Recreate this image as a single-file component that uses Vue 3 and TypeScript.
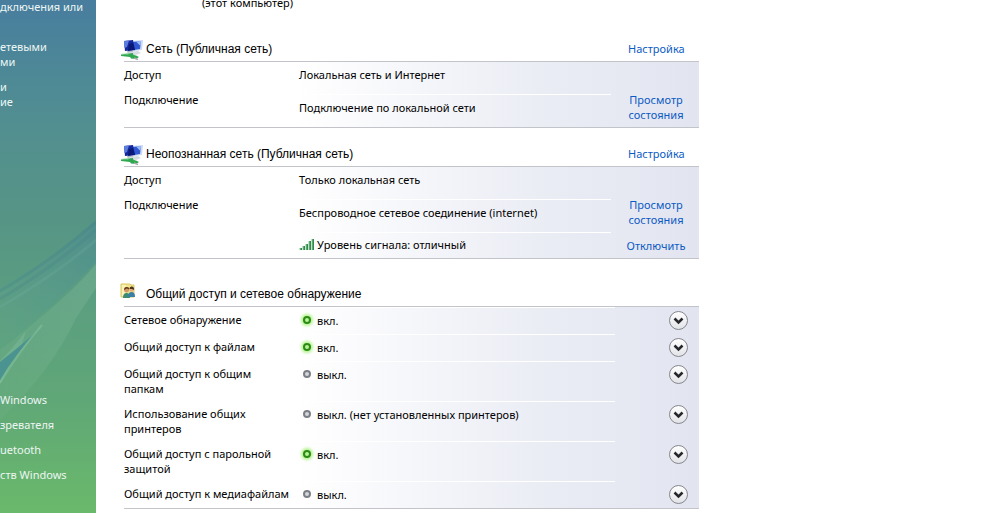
<script setup lang="ts">
interface Detail {
  label?: string
  value: string
  link?: string
  signal?: boolean
}

interface Network {
  name: string
  details: Detail[]
}

interface Setting {
  label: string
  state: string
  on: boolean
}

const taskGroups: string[][] = [
  ['дключения или', ''],
  ['етевыми', 'ми'],
  ['и', 'ие'],
]

const seeAlso: string[] = ['Windows', 'зревателя', 'uetooth', 'ств Windows']

const networks: Network[] = [
  {
    name: 'Сеть (Публичная сеть)',
    details: [
      { label: 'Доступ', value: 'Локальная сеть и Интернет' },
      { label: 'Подключение', value: 'Подключение по локальной сети', link: 'Просмотр состояния' },
    ],
  },
  {
    name: 'Неопознанная сеть (Публичная сеть)',
    details: [
      { label: 'Доступ', value: 'Только локальная сеть' },
      { label: 'Подключение', value: 'Беспроводное сетевое соединение (internet)', link: 'Просмотр состояния' },
      { value: 'Уровень сигнала: отличный', link: 'Отключить', signal: true },
    ],
  },
]

const settings: Setting[] = [
  { label: 'Сетевое обнаружение', state: 'вкл.', on: true },
  { label: 'Общий доступ к файлам', state: 'вкл.', on: true },
  { label: 'Общий доступ к общим папкам', state: 'выкл.', on: false },
  { label: 'Использование общих принтеров', state: 'выкл. (нет установленных принтеров)', on: false },
  { label: 'Общий доступ с парольной защитой', state: 'вкл.', on: true },
  { label: 'Общий доступ к медиафайлам', state: 'выкл.', on: false },
]
</script>

<template>
  <div class="page">
    <aside class="sidebar">
      <svg class="swoosh" viewBox="0 0 96 513" preserveAspectRatio="none" aria-hidden="true">
        <defs>
          <linearGradient id="band" x1="1" y1="0" x2="0" y2="1">
            <stop offset="0" stop-color="#4a8a92" stop-opacity=".6" />
            <stop offset="1" stop-color="#62a58f" stop-opacity=".2" />
          </linearGradient>
          <linearGradient id="pale" x1="1" y1="0" x2="0" y2="1">
            <stop offset="0" stop-color="#86bd9b" stop-opacity=".35" />
            <stop offset="1" stop-color="#86bd9b" stop-opacity=".1" />
          </linearGradient>
        </defs>
        <path d="M96 220 Q55 258 0 288 V350 Q55 305 96 262Z" fill="url(#band)" />
        <path d="M96 222 Q50 262 0 291" fill="none" stroke="#438188" stroke-opacity=".3" stroke-width="3" />
        <path d="M96 230 Q52 268 0 299" fill="none" stroke="#438188" stroke-opacity=".25" stroke-width="3" />
        <path d="M96 240 Q55 275 0 307" fill="none" stroke="#7ab5a3" stroke-opacity=".2" stroke-width="3" />
        <path d="M96 264 Q70 296 0 350 V420 Q52 370 76 318 L96 288Z" fill="url(#pale)" />
        <path d="M26 331 L13 347 0 361 V384 L22 344Z" fill="#7cb99a" fill-opacity=".5" />
        <path d="M36 332 Q18 348 0 362 V380 Q14 356 36 332Z" fill="#4b9390" />
        <path d="M42 325 Q20 350 0 383" fill="none" stroke="#88c49f" stroke-opacity=".5" stroke-width="2" />
      </svg>
      <nav class="tasks">
        <a v-for="(group, i) in taskGroups" :key="i" href="#" class="task">
          <span v-for="(line, j) in group" :key="j" class="task-line">{{ line }}</span>
        </a>
      </nav>
      <nav class="see-also">
        <a v-for="item in seeAlso" :key="item" href="#" class="task">{{ item }}</a>
      </nav>
    </aside>

    <main class="content">
      <p class="computer">(этот компьютер)</p>

      <section v-for="net in networks" :key="net.name" class="network">
        <header class="head">
          <svg class="net-icon" viewBox="0 0 24 22" aria-hidden="true">
            <path d="M7 12h6l2 5H9z" fill="#a7b3c4" />
            <path d="M12 2l11-1-1 10-8 1z" fill="#c9daf5" />
            <path d="M13 3l8-1-1 8-6 1z" fill="#3158d0" />
            <path d="M16 2.500l5-.5-.5 5z" fill="#9dbcf8" />
            <path d="M4 2l9-1 2 10-10 1z" fill="#1428a0" />
            <path d="M4 2l5-.5L7 8l-2.600 1z" fill="#5c7ddc" />
            <path d="M9 5l4-1 2 7-7 1z" fill="#0a1878" />
            <path d="M7 13l11-1 3 2-5 2z" fill="#d7dce3" />
            <path d="M1 15.500l12-1.500v2l3 .5 3 1.500-3 2-5-.5-1-1.500-9-1z" fill="#2fa84f" />
            <path d="M0 15l11-1-3 1.500z" fill="#97dca6" />
            <path d="M14 19l4 1.500" stroke="#a9aaa9" stroke-width="1.500" />
          </svg>
          <h2 class="title">{{ net.name }}</h2>
          <a href="#" class="link">Настройка</a>
        </header>
        <div class="panel">
          <div v-for="(d, i) in net.details" :key="i" class="detail">
            <span class="label">{{ d.label }}</span>
            <span class="value">
              <svg v-if="d.signal" class="signal" viewBox="0 0 15 13" aria-hidden="true">
                <path d="M1 12v-2h2v2zM4 12V8h2v4zM7 12V6h2v6zM10 12V3h2v9zM13 12V1h2v11z" fill="#2f8a4b" />
                <path d="M1 12v-2M4 12V8M7 12V6M10 12V3M13 12V1" stroke="#8dc79b" stroke-width="1" />
              </svg>
              {{ d.value }}
            </span>
            <a v-if="d.link" href="#" class="link">{{ d.link }}</a>
          </div>
        </div>
      </section>

      <section class="sharing">
        <header class="head">
          <svg class="share-icon" viewBox="0 0 16 16" aria-hidden="true">
            <path d="M1 1h9l1 1h3v12H1z" fill="#f2e48c" stroke="#d9c767" />
            <path d="M2 2h4v11H2z" fill="#faf3b8" />
            <path d="M3 15q0-5 3.500-5t3.500 5z" fill="#3c8a72" />
            <path d="M8 14q0-5 3.500-5t3.500 5z" fill="#3b7fa4" />
            <circle cx="6.500" cy="7" r="2.500" fill="#d29a68" />
            <path d="M4 7q0-3.500 3-3t2 2.500l-2-1z" fill="#6b3d20" />
            <circle cx="11.500" cy="6.500" r="2.300" fill="#e0ae7c" />
            <path d="M9.500 6q0-3 2.500-2.500T14 7l-2-1z" fill="#4f331d" />
          </svg>
          <h2 class="title">Общий доступ и сетевое обнаружение</h2>
        </header>
        <div class="panel">
          <div v-for="(s, i) in settings" :key="s.label" class="setting">
            <span :id="`setting-${i}`" class="label">{{ s.label }}</span>
            <span class="value">
              <span class="lamp" :class="{ on: s.on }"></span>
              {{ s.state }}
            </span>
            <button type="button" class="expand" :aria-labelledby="`setting-${i}`">
              <svg viewBox="0 0 17 17" aria-hidden="true">
                <path d="M4.500 6.500l4 4 4-4" fill="none" stroke="#26272b" stroke-width="2.500" />
              </svg>
            </button>
          </div>
        </div>
      </section>
    </main>
  </div>
</template>

<style>
html,
body {
  margin: 0;
  background: #fff;
}
</style>

<style scoped>
.page {
  display: flex;
  min-height: 100vh;
  font: 11px/15px "Noto Sans", "Open Sans", sans-serif;
  color: #000;
}

.sidebar {
  position: relative;
  flex: 0 0 96px;
  box-sizing: border-box;
  display: flex;
  flex-direction: column;
  justify-content: space-between;
  padding-bottom: 31px;
  overflow: hidden;
  background: linear-gradient(#487d9e 0%, #4d8897 14%, #528f90 25%, #569585 43%, #5b9f80 60%, #60a777 78%, #6ab96b 100%);
}

.swoosh {
  position: absolute;
  inset: 0;
  width: 100%;
  height: 100%;
}

.tasks,
.see-also {
  position: relative;
  display: flex;
  flex-direction: column;
  gap: 10px;
}

.tasks {
  margin-top: -1px;
}

.task {
  color: #edf6f3;
  text-decoration: none;
  white-space: nowrap;
}

.task-line {
  display: block;
  min-height: 15px;
}

.content {
  flex: 0 1 603px;
  box-sizing: border-box;
  padding-left: 28px;
}

.computer {
  margin: -5px 0 0 78px;
}

.head {
  display: flex;
  align-items: center;
  box-sizing: border-box;
  height: 26px;
  border-bottom: 1px solid #c3c4ca;
}

.network {
  padding-top: 26px;
}

.network + .network {
  padding-top: 13px;
}

.sharing {
  padding-top: 22px;
}

.title {
  flex: 1;
  margin: 0;
  padding-top: 2px;
  font: 12px/15px "Liberation Sans", Arial, sans-serif;
}

.link {
  color: #0b5bc4;
  text-decoration: none;
}

.head .link {
  width: 71px;
}

.net-icon {
  width: 24px;
  height: 22px;
  margin: 2px 2px 0 -4px;
}

.share-icon {
  width: 16px;
  height: 16px;
  margin: 0 10px 6px -4px;
}

.panel {
  border-bottom: 1px solid #c3c4ca;
  background: linear-gradient(90deg, #fff 30%, #ebedf5 72%, #e2e4f0 100%);
}

.detail {
  display: grid;
  grid-template-columns: 175px 1fr 88px;
  min-height: 25px;
}

.detail .label {
  padding-top: 5px;
}

.detail .value {
  display: flex;
  align-items: center;
  gap: 3px;
}

.detail:nth-child(2) {
  min-height: 40px;
}

.detail:nth-child(2) .value {
  margin-top: 7px;
  padding-bottom: 8px;
  border-top: 1px solid #fff;
}

.detail:nth-child(3) .value {
  padding-bottom: 2px;
  border-top: 1px solid #fff;
}

.detail:nth-child(3) {
  min-height: 26px;
}

.detail .link {
  align-self: center;
  padding: 0 6px 0 8px;
  text-align: center;
}

.signal {
  width: 15px;
  height: 13px;
}

.setting {
  display: grid;
  grid-template-columns: 175px 1fr 84px;
  box-sizing: border-box;
  min-height: 27px;
}

.setting .label {
  padding: 5px 8px 5px 0;
}

.setting .value {
  display: flex;
  align-items: flex-start;
  gap: 5px;
  padding-top: 5px;
  border-top: 1px solid #fff;
}

.lamp {
  box-sizing: border-box;
  width: 8px;
  height: 8px;
  margin: 3px 1px 0 4px;
  border: 2px solid #7b7e84;
  border-radius: 50%;
  background: #d5d6da;
}

.lamp.on {
  border-color: #2c8a16;
  background: #b8f396;
  box-shadow: 0 0 3px 2px #b2f28c;
}

.expand {
  box-sizing: border-box;
  width: 19px;
  height: 19px;
  margin: 4px 11px 0 auto;
  padding: 0;
  border: 1px solid #85878f;
  border-radius: 50%;
  background: linear-gradient(#fff, #e2e3e7);
}

.expand svg {
  display: block;
  width: 100%;
  height: 100%;
}
</style>
